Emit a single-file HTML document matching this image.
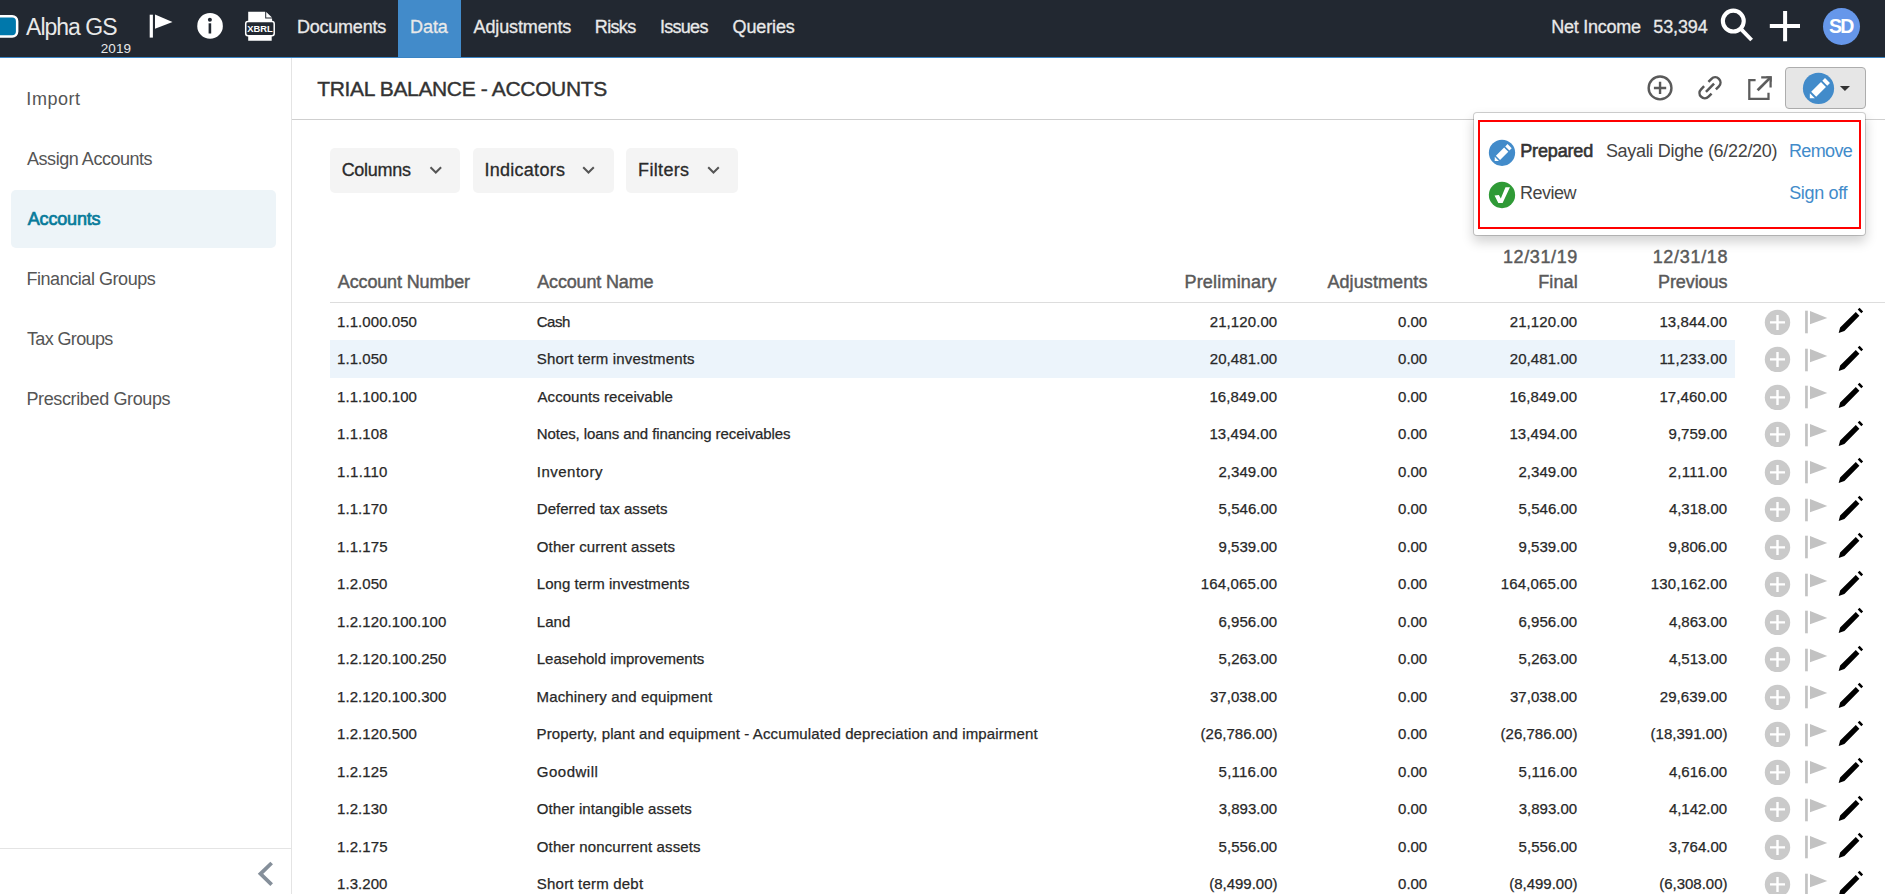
<!DOCTYPE html>
<html lang="en">
<head>
<meta charset="utf-8">
<title>Trial Balance - Accounts</title>
<style>
html,body{margin:0;padding:0;}
body{width:1885px;height:894px;position:relative;overflow:hidden;background:#fff;font-family:"Liberation Sans",sans-serif;color:#333;}
.t{position:absolute;white-space:pre;line-height:1;font-family:"Liberation Sans",sans-serif;color:#333;}
.abs{position:absolute;}
svg.ov{position:absolute;left:0;top:0;width:1885px;height:894px;overflow:hidden;pointer-events:none;}
#nav{left:0;top:0;width:1885px;height:57px;background:#222831;}
#navline{left:0;top:57px;width:1885px;height:1px;background:#3a84c4;}
#tab{left:398px;top:0;width:63px;height:57px;background:#428bca;}
#logo{left:-6px;top:15px;width:19.4px;height:17.7px;border:2.5px solid #fff;border-radius:6px;background:#0078ab;}
#avatar{left:1823px;top:7.7px;width:37.2px;height:37.2px;border-radius:50%;background:#6697ea;}
#side{left:0;top:58px;width:291px;height:836px;border-right:1px solid #e4e4e4;background:#fff;}
#active{left:11px;top:190px;width:265px;height:58px;border-radius:5px;background:#edf4f8;}
#sideline{left:0;top:848px;width:291px;height:1px;background:#e4e4e4;}
#hline{left:292px;top:119px;width:1593px;height:1px;background:#cfcfcf;}
.tb{top:148px;height:45px;background:#f4f4f4;border-radius:5px;}
#thline{left:330px;top:302px;width:1555px;height:1px;background:#ddd;}
#hl{left:330px;top:340px;width:1405px;height:38px;background:#ecf4fb;}
#btn{left:1785px;top:67px;width:79px;height:40px;border:1px solid #adadad;border-radius:4px;background:#e6e6e6;}
#pop{left:1473px;top:112px;width:391px;height:122px;border:1px solid rgba(0,0,0,.18);border-radius:4px;background:#fff;background-clip:padding-box;box-shadow:0 6px 12px rgba(0,0,0,.175);}
#red{left:1478px;top:120px;width:379px;height:105px;border:2px solid #f00;}
</style>
</head>
<body>
<!-- NAV -->
<div id="nav" class="abs"></div>
<div id="tab" class="abs"></div>
<div id="navline" class="abs"></div>
<div id="avatar" class="abs"></div>

<!-- SIDEBAR -->
<div id="side" class="abs"></div>
<div id="active" class="abs"></div>
<div id="sideline" class="abs"></div>

<!-- HEADER / TOOLBAR / TABLE -->
<div id="hline" class="abs"></div>
<div id="btn" class="abs"></div>
<div class="abs tb" style="left:330px;width:130px"></div>
<div class="abs tb" style="left:473px;width:141px"></div>
<div class="abs tb" style="left:626px;width:112px"></div>
<div id="thline" class="abs"></div>
<div id="hl" class="abs"></div>

<svg class="ov" viewBox="0 0 1885 894">
 <defs>
  <g id="icplus"><circle cx="0" cy="0" r="12.7" fill="#cacaca"/><path d="M0 -7.5v15M-7.5 0h15" stroke="#fff" stroke-width="2.4" fill="none"/></g>
  <g id="icflag"><rect x="1805.1" y="-11.7" width="2.7" height="22.6" fill="#c2c2c2"/><path d="M1810 -11.5L1827.3 -4.3L1810 1.9z" fill="#c2c2c2"/></g>
  <g id="icpen"><path d="M0 0L1.4-5.4L17.1-21.1L20.7-17.3L5.7-2.1zM19-23.5L20.9-25.2L24.4-21.6L22.6-19.7z" fill="#000"/></g>
  <g id="chev"><path d="M0 0l5.3 5.3L10.6 0" fill="none" stroke="#555" stroke-width="2"/></g>
  <g id="pencil" fill="#fff"><path d="M0 0L3.6-3.5V3.5z"/><rect x="5.5" y="-3.5" width="13.8" height="7"/><rect x="21.2" y="-3.5" width="3.8" height="7"/></g>
 </defs>
 <!-- logo -->
 <rect x="-4.75" y="16.25" width="21.9" height="20.2" rx="4.9" fill="#0078ab" stroke="#fff" stroke-width="2.5"/>
 <!-- nav flag -->
 <rect x="149.7" y="14.7" width="3.2" height="22.9" fill="#fff"/><path d="M155 14.5L172.5 22.1L155 28.7z" fill="#fff"/>
 <!-- nav info -->
 <circle cx="210.05" cy="25.9" r="12.8" fill="#fff"/><circle cx="209.9" cy="19.7" r="2" fill="#222831"/><rect x="208.6" y="23.3" width="2.6" height="10.2" fill="#222831"/>
 <!-- nav xbrl -->
 <path d="M248.2 11.8H265.2V18.4H272.1V21.5H248.2zM266.2 11.9L272 17.5H266.2zM248.2 36H271.7V40.8H248.2z" fill="#fff"/>
 <rect x="245.7" y="21.6" width="28.5" height="14.1" rx="2.2" fill="#222831" stroke="#fff" stroke-width="1.5"/>
 <text x="260" y="31.8" font-family="Liberation Sans, sans-serif" font-weight="700" font-size="9.4" fill="#fff" text-anchor="middle">XBRL</text>
 <!-- nav search -->
 <circle cx="1733.3" cy="21.1" r="10.45" fill="none" stroke="#fff" stroke-width="4.1"/><path d="M1740.6 28.6L1751.6 40" stroke="#fff" stroke-width="3.9"/>
 <!-- nav plus -->
 <path d="M1785.1 10.9V41.2M1769.8 26.1H1800" stroke="#fff" stroke-width="4" fill="none"/>
 <!-- sidebar collapse chevron -->
 <path d="M271.65 863L260.5 873.85L271.65 884.7" fill="none" stroke="#858f9a" stroke-width="3.8"/>
 <!-- header icons -->
 <circle cx="1660.05" cy="87.95" r="11.4" fill="none" stroke="#5a5a5a" stroke-width="2.4"/><path d="M1660.05 81.8v12.3M1653.9 87.95h12.3" stroke="#5a5a5a" stroke-width="2.4"/>
 <g transform="translate(1710 87.8) rotate(-45)" fill="none" stroke="#575757" stroke-width="2.5"><path d="M3.05 -5.27H7.35A5.27 5.27 0 0 1 7.35 5.27H3.05M-3.05 5.27H-7.35A5.27 5.27 0 0 1 -7.35 -5.27H-3.05M-5.75 0H5.75"/></g>
 <g fill="none" stroke="#5c5c5c"><path d="M1755.6 80.1H1749.3V98.8H1768.5V92.8M1761.2 77.3H1770.6V87.4" stroke-width="2.25"/><path d="M1770.3 77.6L1757.6 90.3" stroke-width="2.7"/></g><path d="M1771.7 76.2V82L1765.9 76.2z" fill="#5c5c5c"/>
 <!-- status button icon -->
 <circle cx="1818.5" cy="88.4" r="15.6" fill="#428bca"/>
 <use href="#pencil" transform="translate(1809.8 98.2) rotate(-45)"/>
 <path d="M1839.9 86H1850L1844.95 91z" fill="#333"/>
 <!-- toolbar chevrons -->
 <use href="#chev" x="430.5" y="167.2"/><use href="#chev" x="583.2" y="167.2"/><use href="#chev" x="708.2" y="167.2"/>
 <!-- row icons -->
<use href="#icplus" x="1777.5" y="322.4"/><use href="#icflag" x="0" y="322.4"/><use href="#icpen" x="1838.7" y="333.0"/>
<use href="#icplus" x="1777.5" y="359.4"/><use href="#icflag" x="0" y="360.4"/><use href="#icpen" x="1838.7" y="371.0"/>
<use href="#icplus" x="1777.5" y="397.4"/><use href="#icflag" x="0" y="397.4"/><use href="#icpen" x="1838.7" y="408.0"/>
<use href="#icplus" x="1777.5" y="434.4"/><use href="#icflag" x="0" y="435.4"/><use href="#icpen" x="1838.7" y="446.0"/>
<use href="#icplus" x="1777.5" y="472.4"/><use href="#icflag" x="0" y="472.4"/><use href="#icpen" x="1838.7" y="483.0"/>
<use href="#icplus" x="1777.5" y="509.4"/><use href="#icflag" x="0" y="510.4"/><use href="#icpen" x="1838.7" y="521.0"/>
<use href="#icplus" x="1777.5" y="547.4"/><use href="#icflag" x="0" y="547.4"/><use href="#icpen" x="1838.7" y="558.0"/>
<use href="#icplus" x="1777.5" y="584.4"/><use href="#icflag" x="0" y="585.4"/><use href="#icpen" x="1838.7" y="596.0"/>
<use href="#icplus" x="1777.5" y="622.4"/><use href="#icflag" x="0" y="622.4"/><use href="#icpen" x="1838.7" y="633.0"/>
<use href="#icplus" x="1777.5" y="659.4"/><use href="#icflag" x="0" y="660.4"/><use href="#icpen" x="1838.7" y="671.0"/>
<use href="#icplus" x="1777.5" y="697.4"/><use href="#icflag" x="0" y="697.4"/><use href="#icpen" x="1838.7" y="708.0"/>
<use href="#icplus" x="1777.5" y="734.4"/><use href="#icflag" x="0" y="735.4"/><use href="#icpen" x="1838.7" y="746.0"/>
<use href="#icplus" x="1777.5" y="772.4"/><use href="#icflag" x="0" y="772.4"/><use href="#icpen" x="1838.7" y="783.0"/>
<use href="#icplus" x="1777.5" y="809.4"/><use href="#icflag" x="0" y="810.4"/><use href="#icpen" x="1838.7" y="821.0"/>
<use href="#icplus" x="1777.5" y="847.4"/><use href="#icflag" x="0" y="847.4"/><use href="#icpen" x="1838.7" y="858.0"/>
<use href="#icplus" x="1777.5" y="884.4"/><use href="#icflag" x="0" y="885.4"/><use href="#icpen" x="1838.7" y="896.0"/>

</svg>

<!-- POPUP -->
<div id="pop" class="abs"></div>
<div id="red" class="abs"></div>
<svg class="ov" viewBox="0 0 1885 894">
 <circle cx="1502" cy="152.8" r="13.15" fill="#428bca"/>
 <use href="#pencil" transform="translate(1494.7 161.1) rotate(-45) scale(0.843)"/>
 <circle cx="1502" cy="195" r="13.15" fill="#2f9a36"/>
 <path d="M1494.56 195.39L1498.85 195.12L1500.82 198.61L1505.48 187.33L1509.95 187.33L1502.61 202.9L1498.32 202.9z" fill="#fff"/>
</svg>

<nav aria-label="Top navigation">
<span class="t" style="left:26.06px;top:16px;font-size:23px;letter-spacing:-0.993px;color:#e9e9e9">Alpha GS</span>
<span class="t" style="left:100.82px;top:42px;font-size:13.5px;letter-spacing:0.024px;color:#e9e9e9">2019</span>
<span class="t" style="left:296.97px;top:18px;font-size:18px;letter-spacing:-0.227px;color:#e9e9e9;-webkit-text-stroke:0.3px #e9e9e9">Documents</span>
<span class="t" style="left:410.07px;top:18px;font-size:18px;letter-spacing:-0.085px;color:#e9e9e9;-webkit-text-stroke:0.3px #e9e9e9">Data</span>
<span class="t" style="left:473.51px;top:18px;font-size:18px;letter-spacing:-0.126px;color:#e9e9e9;-webkit-text-stroke:0.3px #e9e9e9">Adjustments</span>
<span class="t" style="left:594.87px;top:18px;font-size:18px;letter-spacing:-0.668px;color:#e9e9e9;-webkit-text-stroke:0.3px #e9e9e9">Risks</span>
<span class="t" style="left:660.09px;top:18px;font-size:18px;letter-spacing:-0.744px;color:#e9e9e9;-webkit-text-stroke:0.3px #e9e9e9">Issues</span>
<span class="t" style="left:732.60px;top:18px;font-size:18px;letter-spacing:-0.138px;color:#e9e9e9;-webkit-text-stroke:0.3px #e9e9e9">Queries</span>
<span class="t" style="left:1551.37px;top:18px;font-size:18px;letter-spacing:-0.275px;color:#e9e9e9;-webkit-text-stroke:0.3px #e9e9e9">Net Income</span>
<span class="t" style="left:1653.33px;top:18px;font-size:18px;letter-spacing:-0.143px;color:#e9e9e9;-webkit-text-stroke:0.3px #e9e9e9">53,394</span>
<span class="t" style="left:1828.94px;top:17px;font-size:19.5px;letter-spacing:-1.713px;font-weight:700;color:#fff">SD</span>
</nav>
<header aria-label="Page header">
<span class="t" style="left:317.23px;top:78px;font-size:21px;letter-spacing:-0.344px;-webkit-text-stroke:0.4px #333">TRIAL BALANCE - ACCOUNTS</span>
</header>
<aside aria-label="Data navigation">
<span class="t" style="left:26.34px;top:90px;font-size:18px;letter-spacing:0.555px;color:#555">Import</span>
<span class="t" style="left:27.06px;top:150px;font-size:18px;letter-spacing:-0.464px;color:#555">Assign Accounts</span>
<span class="t" style="left:27.71px;top:210px;font-size:18px;letter-spacing:-0.166px;color:#087b9b;-webkit-text-stroke:0.7px #087b9b">Accounts</span>
<span class="t" style="left:26.42px;top:270px;font-size:18px;letter-spacing:-0.443px;color:#555">Financial Groups</span>
<span class="t" style="left:27.00px;top:330px;font-size:18px;letter-spacing:-0.632px;color:#555">Tax Groups</span>
<span class="t" style="left:26.42px;top:390px;font-size:18px;letter-spacing:-0.366px;color:#555">Prescribed Groups</span>
</aside>
<section aria-label="Table toolbar">
<span class="t" style="left:341.64px;top:161px;font-size:18px;letter-spacing:-0.294px;color:#2a2a2a;-webkit-text-stroke:0.3px #2a2a2a">Columns</span>
<span class="t" style="left:484.39px;top:161px;font-size:18px;letter-spacing:0.285px;color:#2a2a2a;-webkit-text-stroke:0.3px #2a2a2a">Indicators</span>
<span class="t" style="left:638.07px;top:161px;font-size:18px;letter-spacing:0.338px;color:#2a2a2a;-webkit-text-stroke:0.3px #2a2a2a">Filters</span>
</section>
<section aria-label="Sign off menu">
<span class="t" style="left:1520.22px;top:142px;font-size:18px;letter-spacing:-0.147px;-webkit-text-stroke:0.6px #333">Prepared</span>
<span class="t" style="left:1605.88px;top:142px;font-size:18px;letter-spacing:-0.308px;color:#444">Sayali Dighe (6/22/20)</span>
<span class="t" style="left:1788.92px;top:142px;font-size:18px;letter-spacing:-0.611px;color:#428bca">Remove</span>
<span class="t" style="left:1519.92px;top:184px;font-size:18px;letter-spacing:-0.480px;color:#444">Review</span>
<span class="t" style="left:1789.18px;top:184px;font-size:18px;letter-spacing:-0.333px;color:#428bca">Sign off</span>
</section>
<section aria-label="Accounts table header">
<span class="t" style="left:337.79px;top:273px;font-size:18px;letter-spacing:-0.137px;color:#5a5a5a;-webkit-text-stroke:0.45px #5a5a5a">Account Number</span>
<span class="t" style="left:537.19px;top:273px;font-size:18px;letter-spacing:-0.153px;color:#5a5a5a;-webkit-text-stroke:0.45px #5a5a5a">Account Name</span>
<span class="t" style="left:1184.45px;top:273px;font-size:18px;letter-spacing:0.203px;color:#5a5a5a;-webkit-text-stroke:0.45px #5a5a5a">Preliminary</span>
<span class="t" style="left:1327.39px;top:273px;font-size:18px;letter-spacing:0.099px;color:#5a5a5a;-webkit-text-stroke:0.45px #5a5a5a">Adjustments</span>
<span class="t" style="left:1502.95px;top:248px;font-size:18px;letter-spacing:0.614px;color:#5a5a5a;-webkit-text-stroke:0.45px #5a5a5a">12/31/19</span>
<span class="t" style="left:1538.25px;top:273px;font-size:18px;letter-spacing:0.104px;color:#5a5a5a;-webkit-text-stroke:0.45px #5a5a5a">Final</span>
<span class="t" style="left:1652.65px;top:248px;font-size:18px;letter-spacing:0.689px;color:#5a5a5a;-webkit-text-stroke:0.45px #5a5a5a">12/31/18</span>
<span class="t" style="left:1658.05px;top:273px;font-size:18px;letter-spacing:-0.093px;color:#5a5a5a;-webkit-text-stroke:0.45px #5a5a5a">Previous</span>
</section>
<div aria-label="Account row 1.1.000.050">
<span class="t" style="left:337.08px;top:314px;font-size:15px;letter-spacing:0.058px;color:#282828;-webkit-text-stroke:0.25px #282828">1.1.000.050</span>
<span class="t" style="left:536.76px;top:314px;font-size:15px;letter-spacing:-0.482px;color:#282828;-webkit-text-stroke:0.25px #282828">Cash</span>
<span class="t" style="left:1209.77px;top:314px;font-size:15px;letter-spacing:0.082px;color:#282828;-webkit-text-stroke:0.25px #282828">21,120.00</span>
<span class="t" style="left:1398.09px;top:314px;font-size:15px;letter-spacing:-0.044px;color:#282828;-webkit-text-stroke:0.25px #282828">0.00</span>
<span class="t" style="left:1509.77px;top:314px;font-size:15px;letter-spacing:0.082px;color:#282828;-webkit-text-stroke:0.25px #282828">21,120.00</span>
<span class="t" style="left:1659.38px;top:314px;font-size:15px;letter-spacing:0.131px;color:#282828;-webkit-text-stroke:0.25px #282828">13,844.00</span>
</div>
<div aria-label="Account row 1.1.050">
<span class="t" style="left:337.08px;top:351px;font-size:15px;letter-spacing:0.055px;color:#282828;-webkit-text-stroke:0.25px #282828">1.1.050</span>
<span class="t" style="left:536.84px;top:351px;font-size:15px;letter-spacing:0.164px;color:#282828;-webkit-text-stroke:0.25px #282828">Short term investments</span>
<span class="t" style="left:1209.77px;top:351px;font-size:15px;letter-spacing:0.082px;color:#282828;-webkit-text-stroke:0.25px #282828">20,481.00</span>
<span class="t" style="left:1398.09px;top:351px;font-size:15px;letter-spacing:-0.044px;color:#282828;-webkit-text-stroke:0.25px #282828">0.00</span>
<span class="t" style="left:1509.77px;top:351px;font-size:15px;letter-spacing:0.082px;color:#282828;-webkit-text-stroke:0.25px #282828">20,481.00</span>
<span class="t" style="left:1659.38px;top:351px;font-size:15px;letter-spacing:0.269px;color:#282828;-webkit-text-stroke:0.25px #282828">11,233.00</span>
</div>
<div aria-label="Account row 1.1.100.100">
<span class="t" style="left:337.08px;top:389px;font-size:15px;letter-spacing:0.058px;color:#282828;-webkit-text-stroke:0.25px #282828">1.1.100.100</span>
<span class="t" style="left:537.50px;top:389px;font-size:15px;letter-spacing:0.066px;color:#282828;-webkit-text-stroke:0.25px #282828">Accounts receivable</span>
<span class="t" style="left:1209.38px;top:389px;font-size:15px;letter-spacing:0.131px;color:#282828;-webkit-text-stroke:0.25px #282828">16,849.00</span>
<span class="t" style="left:1398.09px;top:389px;font-size:15px;letter-spacing:-0.044px;color:#282828;-webkit-text-stroke:0.25px #282828">0.00</span>
<span class="t" style="left:1509.38px;top:389px;font-size:15px;letter-spacing:0.131px;color:#282828;-webkit-text-stroke:0.25px #282828">16,849.00</span>
<span class="t" style="left:1659.38px;top:389px;font-size:15px;letter-spacing:0.131px;color:#282828;-webkit-text-stroke:0.25px #282828">17,460.00</span>
</div>
<div aria-label="Account row 1.1.108">
<span class="t" style="left:337.08px;top:426px;font-size:15px;letter-spacing:0.066px;color:#282828;-webkit-text-stroke:0.25px #282828">1.1.108</span>
<span class="t" style="left:536.79px;top:426px;font-size:15px;letter-spacing:-0.081px;color:#282828;-webkit-text-stroke:0.25px #282828">Notes, loans and financing receivables</span>
<span class="t" style="left:1209.38px;top:426px;font-size:15px;letter-spacing:0.131px;color:#282828;-webkit-text-stroke:0.25px #282828">13,494.00</span>
<span class="t" style="left:1398.09px;top:426px;font-size:15px;letter-spacing:-0.044px;color:#282828;-webkit-text-stroke:0.25px #282828">0.00</span>
<span class="t" style="left:1509.38px;top:426px;font-size:15px;letter-spacing:0.131px;color:#282828;-webkit-text-stroke:0.25px #282828">13,494.00</span>
<span class="t" style="left:1668.52px;top:426px;font-size:15px;letter-spacing:0.035px;color:#282828;-webkit-text-stroke:0.25px #282828">9,759.00</span>
</div>
<div aria-label="Account row 1.1.110">
<span class="t" style="left:337.08px;top:464px;font-size:15px;letter-spacing:0.240px;color:#282828;-webkit-text-stroke:0.25px #282828">1.1.110</span>
<span class="t" style="left:536.84px;top:464px;font-size:15px;letter-spacing:0.483px;color:#282828;-webkit-text-stroke:0.25px #282828">Inventory</span>
<span class="t" style="left:1218.47px;top:464px;font-size:15px;letter-spacing:0.043px;color:#282828;-webkit-text-stroke:0.25px #282828">2,349.00</span>
<span class="t" style="left:1398.09px;top:464px;font-size:15px;letter-spacing:-0.044px;color:#282828;-webkit-text-stroke:0.25px #282828">0.00</span>
<span class="t" style="left:1518.47px;top:464px;font-size:15px;letter-spacing:0.043px;color:#282828;-webkit-text-stroke:0.25px #282828">2,349.00</span>
<span class="t" style="left:1668.47px;top:464px;font-size:15px;letter-spacing:0.360px;color:#282828;-webkit-text-stroke:0.25px #282828">2,111.00</span>
</div>
<div aria-label="Account row 1.1.170">
<span class="t" style="left:337.08px;top:501px;font-size:15px;letter-spacing:0.055px;color:#282828;-webkit-text-stroke:0.25px #282828">1.1.170</span>
<span class="t" style="left:536.79px;top:501px;font-size:15px;letter-spacing:0.037px;color:#282828;-webkit-text-stroke:0.25px #282828">Deferred tax assets</span>
<span class="t" style="left:1218.62px;top:501px;font-size:15px;letter-spacing:0.021px;color:#282828;-webkit-text-stroke:0.25px #282828">5,546.00</span>
<span class="t" style="left:1398.09px;top:501px;font-size:15px;letter-spacing:-0.044px;color:#282828;-webkit-text-stroke:0.25px #282828">0.00</span>
<span class="t" style="left:1518.62px;top:501px;font-size:15px;letter-spacing:0.021px;color:#282828;-webkit-text-stroke:0.25px #282828">5,546.00</span>
<span class="t" style="left:1668.88px;top:501px;font-size:15px;letter-spacing:-0.016px;color:#282828;-webkit-text-stroke:0.25px #282828">4,318.00</span>
</div>
<div aria-label="Account row 1.1.175">
<span class="t" style="left:337.08px;top:539px;font-size:15px;letter-spacing:0.063px;color:#282828;-webkit-text-stroke:0.25px #282828">1.1.175</span>
<span class="t" style="left:536.81px;top:539px;font-size:15px;letter-spacing:0.122px;color:#282828;-webkit-text-stroke:0.25px #282828">Other current assets</span>
<span class="t" style="left:1218.52px;top:539px;font-size:15px;letter-spacing:0.035px;color:#282828;-webkit-text-stroke:0.25px #282828">9,539.00</span>
<span class="t" style="left:1398.09px;top:539px;font-size:15px;letter-spacing:-0.044px;color:#282828;-webkit-text-stroke:0.25px #282828">0.00</span>
<span class="t" style="left:1518.52px;top:539px;font-size:15px;letter-spacing:0.035px;color:#282828;-webkit-text-stroke:0.25px #282828">9,539.00</span>
<span class="t" style="left:1668.52px;top:539px;font-size:15px;letter-spacing:0.035px;color:#282828;-webkit-text-stroke:0.25px #282828">9,806.00</span>
</div>
<div aria-label="Account row 1.2.050">
<span class="t" style="left:337.08px;top:576px;font-size:15px;letter-spacing:0.055px;color:#282828;-webkit-text-stroke:0.25px #282828">1.2.050</span>
<span class="t" style="left:536.79px;top:576px;font-size:15px;letter-spacing:0.044px;color:#282828;-webkit-text-stroke:0.25px #282828">Long term investments</span>
<span class="t" style="left:1200.68px;top:576px;font-size:15px;letter-spacing:0.156px;color:#282828;-webkit-text-stroke:0.25px #282828">164,065.00</span>
<span class="t" style="left:1398.09px;top:576px;font-size:15px;letter-spacing:-0.044px;color:#282828;-webkit-text-stroke:0.25px #282828">0.00</span>
<span class="t" style="left:1500.68px;top:576px;font-size:15px;letter-spacing:0.156px;color:#282828;-webkit-text-stroke:0.25px #282828">164,065.00</span>
<span class="t" style="left:1650.68px;top:576px;font-size:15px;letter-spacing:0.156px;color:#282828;-webkit-text-stroke:0.25px #282828">130,162.00</span>
</div>
<div aria-label="Account row 1.2.120.100.100">
<span class="t" style="left:337.08px;top:614px;font-size:15px;letter-spacing:0.060px;color:#282828;-webkit-text-stroke:0.25px #282828">1.2.120.100.100</span>
<span class="t" style="left:536.79px;top:614px;font-size:15px;letter-spacing:0.057px;color:#282828;-webkit-text-stroke:0.25px #282828">Land</span>
<span class="t" style="left:1218.46px;top:614px;font-size:15px;letter-spacing:0.044px;color:#282828;-webkit-text-stroke:0.25px #282828">6,956.00</span>
<span class="t" style="left:1398.09px;top:614px;font-size:15px;letter-spacing:-0.044px;color:#282828;-webkit-text-stroke:0.25px #282828">0.00</span>
<span class="t" style="left:1518.46px;top:614px;font-size:15px;letter-spacing:0.044px;color:#282828;-webkit-text-stroke:0.25px #282828">6,956.00</span>
<span class="t" style="left:1668.88px;top:614px;font-size:15px;letter-spacing:-0.016px;color:#282828;-webkit-text-stroke:0.25px #282828">4,863.00</span>
</div>
<div aria-label="Account row 1.2.120.100.250">
<span class="t" style="left:337.08px;top:651px;font-size:15px;letter-spacing:0.060px;color:#282828;-webkit-text-stroke:0.25px #282828">1.2.120.100.250</span>
<span class="t" style="left:536.79px;top:651px;font-size:15px;color:#282828;-webkit-text-stroke:0.25px #282828">Leasehold improvements</span>
<span class="t" style="left:1218.62px;top:651px;font-size:15px;letter-spacing:0.021px;color:#282828;-webkit-text-stroke:0.25px #282828">5,263.00</span>
<span class="t" style="left:1398.09px;top:651px;font-size:15px;letter-spacing:-0.044px;color:#282828;-webkit-text-stroke:0.25px #282828">0.00</span>
<span class="t" style="left:1518.62px;top:651px;font-size:15px;letter-spacing:0.021px;color:#282828;-webkit-text-stroke:0.25px #282828">5,263.00</span>
<span class="t" style="left:1668.88px;top:651px;font-size:15px;letter-spacing:-0.016px;color:#282828;-webkit-text-stroke:0.25px #282828">4,513.00</span>
</div>
<div aria-label="Account row 1.2.120.100.300">
<span class="t" style="left:337.08px;top:689px;font-size:15px;letter-spacing:0.060px;color:#282828;-webkit-text-stroke:0.25px #282828">1.2.120.100.300</span>
<span class="t" style="left:536.59px;top:689px;font-size:15px;letter-spacing:0.131px;color:#282828;-webkit-text-stroke:0.25px #282828">Machinery and equipment</span>
<span class="t" style="left:1209.95px;top:689px;font-size:15px;letter-spacing:0.059px;color:#282828;-webkit-text-stroke:0.25px #282828">37,038.00</span>
<span class="t" style="left:1398.09px;top:689px;font-size:15px;letter-spacing:-0.044px;color:#282828;-webkit-text-stroke:0.25px #282828">0.00</span>
<span class="t" style="left:1509.95px;top:689px;font-size:15px;letter-spacing:0.059px;color:#282828;-webkit-text-stroke:0.25px #282828">37,038.00</span>
<span class="t" style="left:1659.77px;top:689px;font-size:15px;letter-spacing:0.082px;color:#282828;-webkit-text-stroke:0.25px #282828">29,639.00</span>
</div>
<div aria-label="Account row 1.2.120.500">
<span class="t" style="left:337.08px;top:726px;font-size:15px;letter-spacing:0.058px;color:#282828;-webkit-text-stroke:0.25px #282828">1.2.120.500</span>
<span class="t" style="left:536.59px;top:726px;font-size:15px;letter-spacing:0.121px;color:#282828;-webkit-text-stroke:0.25px #282828">Property, plant and equipment - Accumulated depreciation and impairment</span>
<span class="t" style="left:1200.49px;top:726px;font-size:15px;letter-spacing:0.028px;color:#282828;-webkit-text-stroke:0.25px #282828">(26,786.00)</span>
<span class="t" style="left:1398.09px;top:726px;font-size:15px;letter-spacing:-0.044px;color:#282828;-webkit-text-stroke:0.25px #282828">0.00</span>
<span class="t" style="left:1500.49px;top:726px;font-size:15px;letter-spacing:0.028px;color:#282828;-webkit-text-stroke:0.25px #282828">(26,786.00)</span>
<span class="t" style="left:1650.49px;top:726px;font-size:15px;letter-spacing:0.028px;color:#282828;-webkit-text-stroke:0.25px #282828">(18,391.00)</span>
</div>
<div aria-label="Account row 1.2.125">
<span class="t" style="left:337.08px;top:764px;font-size:15px;letter-spacing:0.063px;color:#282828;-webkit-text-stroke:0.25px #282828">1.2.125</span>
<span class="t" style="left:536.77px;top:764px;font-size:15px;letter-spacing:0.511px;color:#282828;-webkit-text-stroke:0.25px #282828">Goodwill</span>
<span class="t" style="left:1218.62px;top:764px;font-size:15px;letter-spacing:0.179px;color:#282828;-webkit-text-stroke:0.25px #282828">5,116.00</span>
<span class="t" style="left:1398.09px;top:764px;font-size:15px;letter-spacing:-0.044px;color:#282828;-webkit-text-stroke:0.25px #282828">0.00</span>
<span class="t" style="left:1518.62px;top:764px;font-size:15px;letter-spacing:0.179px;color:#282828;-webkit-text-stroke:0.25px #282828">5,116.00</span>
<span class="t" style="left:1668.88px;top:764px;font-size:15px;letter-spacing:-0.016px;color:#282828;-webkit-text-stroke:0.25px #282828">4,616.00</span>
</div>
<div aria-label="Account row 1.2.130">
<span class="t" style="left:337.08px;top:801px;font-size:15px;letter-spacing:0.055px;color:#282828;-webkit-text-stroke:0.25px #282828">1.2.130</span>
<span class="t" style="left:536.81px;top:801px;font-size:15px;letter-spacing:0.072px;color:#282828;-webkit-text-stroke:0.25px #282828">Other intangible assets</span>
<span class="t" style="left:1218.65px;top:801px;font-size:15px;letter-spacing:0.017px;color:#282828;-webkit-text-stroke:0.25px #282828">3,893.00</span>
<span class="t" style="left:1398.09px;top:801px;font-size:15px;letter-spacing:-0.044px;color:#282828;-webkit-text-stroke:0.25px #282828">0.00</span>
<span class="t" style="left:1518.65px;top:801px;font-size:15px;letter-spacing:0.017px;color:#282828;-webkit-text-stroke:0.25px #282828">3,893.00</span>
<span class="t" style="left:1668.88px;top:801px;font-size:15px;letter-spacing:-0.016px;color:#282828;-webkit-text-stroke:0.25px #282828">4,142.00</span>
</div>
<div aria-label="Account row 1.2.175">
<span class="t" style="left:337.08px;top:839px;font-size:15px;letter-spacing:0.063px;color:#282828;-webkit-text-stroke:0.25px #282828">1.2.175</span>
<span class="t" style="left:536.81px;top:839px;font-size:15px;letter-spacing:0.131px;color:#282828;-webkit-text-stroke:0.25px #282828">Other noncurrent assets</span>
<span class="t" style="left:1218.62px;top:839px;font-size:15px;letter-spacing:0.021px;color:#282828;-webkit-text-stroke:0.25px #282828">5,556.00</span>
<span class="t" style="left:1398.09px;top:839px;font-size:15px;letter-spacing:-0.044px;color:#282828;-webkit-text-stroke:0.25px #282828">0.00</span>
<span class="t" style="left:1518.62px;top:839px;font-size:15px;letter-spacing:0.021px;color:#282828;-webkit-text-stroke:0.25px #282828">5,556.00</span>
<span class="t" style="left:1668.65px;top:839px;font-size:15px;letter-spacing:0.017px;color:#282828;-webkit-text-stroke:0.25px #282828">3,764.00</span>
</div>
<div aria-label="Account row 1.3.200">
<span class="t" style="left:337.08px;top:876px;font-size:15px;letter-spacing:0.055px;color:#282828;-webkit-text-stroke:0.25px #282828">1.3.200</span>
<span class="t" style="left:536.84px;top:876px;font-size:15px;letter-spacing:0.204px;color:#282828;-webkit-text-stroke:0.25px #282828">Short term debt</span>
<span class="t" style="left:1209.19px;top:876px;font-size:15px;letter-spacing:-0.009px;color:#282828;-webkit-text-stroke:0.25px #282828">(8,499.00)</span>
<span class="t" style="left:1398.09px;top:876px;font-size:15px;letter-spacing:-0.044px;color:#282828;-webkit-text-stroke:0.25px #282828">0.00</span>
<span class="t" style="left:1509.19px;top:876px;font-size:15px;letter-spacing:-0.009px;color:#282828;-webkit-text-stroke:0.25px #282828">(8,499.00)</span>
<span class="t" style="left:1659.19px;top:876px;font-size:15px;letter-spacing:-0.009px;color:#282828;-webkit-text-stroke:0.25px #282828">(6,308.00)</span>
</div>
</body>
</html>
